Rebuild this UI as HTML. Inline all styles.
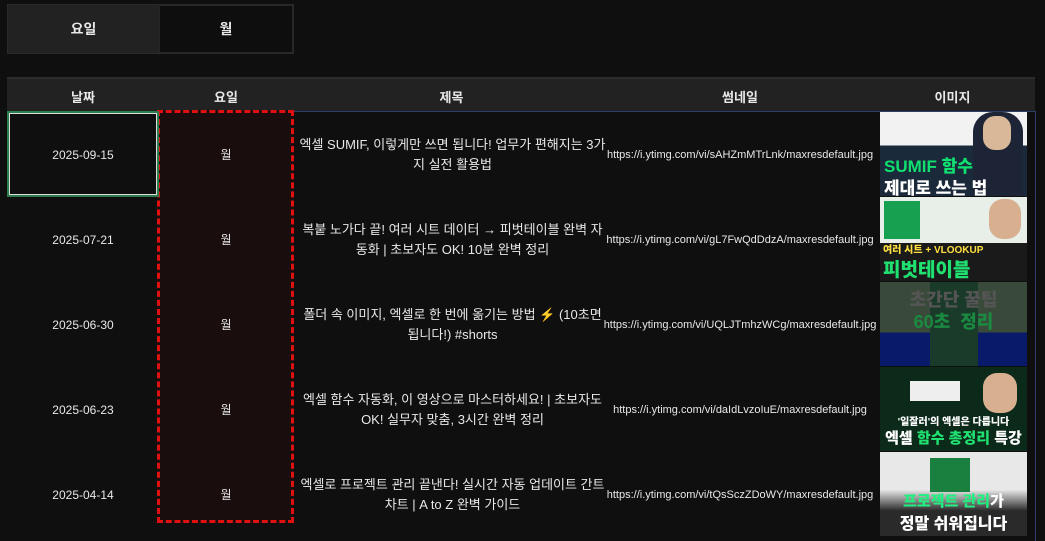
<!DOCTYPE html><html><head><meta charset="utf-8"><style>
*{box-sizing:border-box;margin:0;padding:0}
body{width:1045px;height:534px;overflow:hidden;background:#0f0f0f;color:#e8e8e8;font-family:"Liberation Sans","Noto Sans CJK KR",sans-serif;font-size:12px;position:relative}
.a{position:absolute}
.tabs{left:7px;top:4px;width:287px;height:50px;background:#222;border:1px solid #2a2a2a}
.tab1{left:0;top:0;width:151px;height:48px;display:flex;align-items:center;justify-content:center;font-size:14px;font-weight:bold}
.tab2{left:151px;top:0;width:134px;height:48px;background:#0e0e0e;border:1px solid #262626;display:flex;align-items:center;justify-content:center;font-size:14px;font-weight:bold}
.hdr{left:7px;top:77px;width:1028px;height:34px;background:#222;border-top:2px solid #2c2c2c}
.h{top:0;height:34px;display:flex;align-items:center;justify-content:center;font-weight:bold;font-size:13px}
.c{display:flex;align-items:center;justify-content:center;text-align:center;line-height:20px}
.t{font-size:13px;padding:0 2px}
.th{left:880px;width:147px;height:84px;overflow:hidden}
.th b{position:absolute;left:0;width:100%;text-align:center;font-weight:900;white-space:nowrap}
</style></head><body>
<div class="a tabs"><div class="a tab1">요일</div><div class="a tab2">월</div></div>
<div class="a hdr">
<div class="a h" style="left:0;width:152px">날짜</div>
<div class="a h" style="left:152px;width:134px">요일</div>
<div class="a h" style="left:286px;width:317px">제목</div>
<div class="a h" style="left:603px;width:260px">썸네일</div>
<div class="a h" style="left:863px;width:165px">이미지</div>
</div>
<div class="a" style="left:7px;top:111px;width:1029px;height:430px;border-right:1px solid #2d3e66;border-top:1px solid #2d3e66"></div>
<div class="a" style="left:157px;top:110px;width:137px;height:413px;background:#1a0d0d;border:3px dashed #e01010"></div>
<div class="a" style="left:7px;top:111px;width:152px;height:86px;border:2px solid #2e7d4f;"><div style="position:absolute;inset:0;border:1px solid #ddd"></div></div>

<div class="a c" style="left:7px;top:112px;width:152px;height:85px">2025-09-15</div>
<div class="a c" style="left:7px;top:197px;width:152px;height:85px">2025-07-21</div>
<div class="a c" style="left:7px;top:282px;width:152px;height:85px">2025-06-30</div>
<div class="a c" style="left:7px;top:367px;width:152px;height:85px">2025-06-23</div>
<div class="a c" style="left:7px;top:452px;width:152px;height:85px">2025-04-14</div>

<div class="a c" style="left:159px;top:112px;width:134px;height:85px">월</div>
<div class="a c" style="left:159px;top:197px;width:134px;height:85px">월</div>
<div class="a c" style="left:159px;top:282px;width:134px;height:85px">월</div>
<div class="a c" style="left:159px;top:367px;width:134px;height:85px">월</div>
<div class="a c" style="left:159px;top:452px;width:134px;height:85px">월</div>

<div class="a c t" style="left:295px;top:112px;width:315px;height:85px">엑셀 SUMIF, 이렇게만 쓰면 됩니다! 업무가 편해지는 3가지 실전 활용법</div>
<div class="a c t" style="left:295px;top:197px;width:315px;height:85px">복붙 노가다 끝! 여러 시트 데이터 → 피벗테이블 완벽 자동화 | 초보자도 OK! 10분 완벽 정리</div>
<div class="a c t" style="left:295px;top:282px;width:315px;height:85px">폴더 속 이미지, 엑셀로 한 번에 옮기는 방법 ⚡ (10초면 됩니다!) #shorts</div>
<div class="a c t" style="left:295px;top:367px;width:315px;height:85px">엑셀 함수 자동화, 이 영상으로 마스터하세요! | 초보자도 OK! 실무자 맞춤, 3시간 완벽 정리</div>
<div class="a c t" style="left:295px;top:452px;width:315px;height:85px">엑셀로 프로젝트 관리 끝낸다! 실시간 자동 업데이트 간트차트 | A to Z 완벽 가이드</div>

<div class="a c" style="left:610px;top:112px;width:260px;height:85px;font-size:11px">https://i.ytimg.com/vi/sAHZmMTrLnk/maxresdefault.jpg</div>
<div class="a c" style="left:610px;top:197px;width:260px;height:85px;font-size:11px">https://i.ytimg.com/vi/gL7FwQdDdzA/maxresdefault.jpg</div>
<div class="a c" style="left:610px;top:282px;width:260px;height:85px;font-size:11px">https://i.ytimg.com/vi/UQLJTmhzWCg/maxresdefault.jpg</div>
<div class="a c" style="left:610px;top:367px;width:260px;height:85px;font-size:11px">https://i.ytimg.com/vi/daIdLvzoIuE/maxresdefault.jpg</div>
<div class="a c" style="left:610px;top:452px;width:260px;height:85px;font-size:11px">https://i.ytimg.com/vi/tQsSczZDoWY/maxresdefault.jpg</div>

<div class="a th" style="top:112px;background:linear-gradient(#f2f2f2 0,#f2f2f2 40%,#1a2a3a 40%)">
<div class="a" style="right:4px;top:0;width:50px;height:84px;background:#1c2436;border-radius:20px 20px 0 0"></div>
<div class="a" style="right:16px;top:4px;width:28px;height:34px;background:#d9b89a;border-radius:12px"></div>
<b style="top:40px;font-size:17px;color:#10e070;text-align:left;padding-left:4px">SUMIF 함수</b>
<b style="top:62px;font-size:17px;color:#fff;text-align:left;padding-left:4px">제대로 쓰는 법</b></div>
<div class="a th" style="top:197px;background:linear-gradient(#e8efe8 0,#e8efe8 55%,#1a1a1a 55%)">
<div class="a" style="left:4px;top:4px;width:36px;height:38px;background:#16a050"></div>
<div class="a" style="right:6px;top:2px;width:32px;height:40px;background:#d8b090;border-radius:14px"></div>
<b style="top:44px;font-size:10px;color:#ffe040;text-align:left;padding-left:3px">여러 시트 + VLOOKUP</b>
<b style="top:58px;font-size:19px;color:#20e070;text-align:left;padding-left:3px">피벗테이블</b></div>
<div class="a th" style="top:282px;background:linear-gradient(#3a4a3a 0,#3a4a3a 60%,#0a1a6a 60%)">
<div class="a" style="left:50px;top:0;width:48px;height:84px;background:#1a3a2a"></div>
<b style="top:4px;font-size:18px;color:#555">초간단 꿀팁</b>
<b style="top:26px;font-size:18px;color:#1a8a40">60초 &nbsp;정리</b></div>
<div class="a th" style="top:367px;background:#0c2a1a">
<div class="a" style="left:30px;top:14px;width:50px;height:20px;background:#eee"></div>
<div class="a" style="right:10px;top:6px;width:34px;height:40px;background:#d8b090;border-radius:14px"></div>
<b style="top:46px;font-size:10px;color:#fff">'일잘러'의 엑셀은 다릅니다</b>
<b style="top:60px;font-size:15px;color:#fff">엑셀 <span style="color:#20e070">함수 총정리</span> 특강</b></div>
<div class="a th" style="top:452px;background:linear-gradient(#e8e8e8 0,#e8e8e8 45%,#2a2a2a 70%)">
<div class="a" style="left:50px;top:6px;width:40px;height:34px;background:#1a8040"></div>
<b style="top:38px;font-size:15px;color:#20f080">프로젝트 관리<span style="color:#fff">가</span></b>
<b style="top:58px;font-size:16px;color:#fff">정말 쉬워집니다</b></div>
</body></html>
